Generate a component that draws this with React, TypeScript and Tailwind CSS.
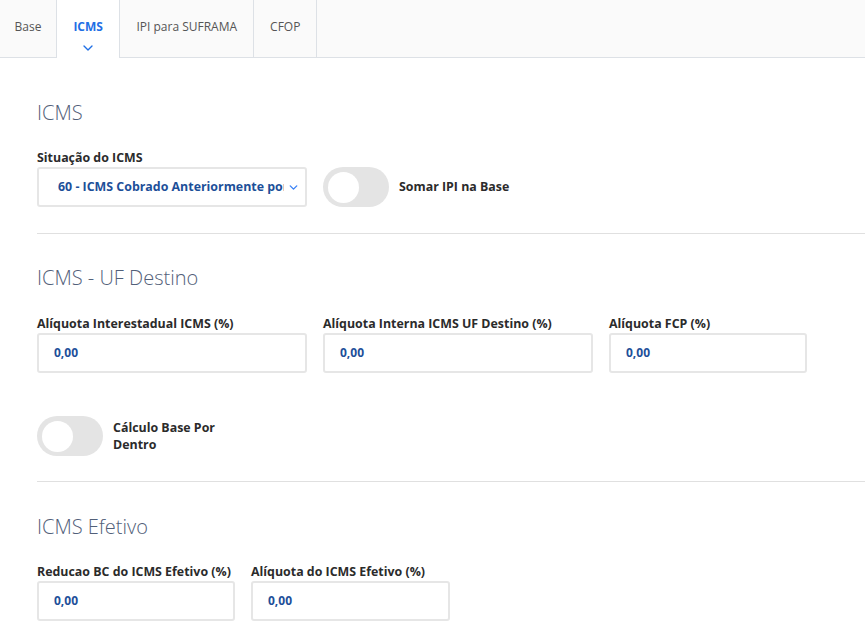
import { ChevronDown } from 'lucide-react'

const tabs = ['Base', 'ICMS', 'IPI para SUFRAMA', 'CFOP']

function Toggle() {
  return (
    <div className="w-[66px] h-[40px] rounded-full bg-[#e4e4e4] flex items-center pl-[5px] shrink-0">
      <div className="w-[31px] h-[31px] rounded-full bg-white" />
    </div>
  )
}

function Field({ label, width }: { label: string; width: string }) {
  return (
    <div className={`flex flex-col ${width}`}>
      <label className="text-[12.4px] font-bold text-[#2b2b2b] leading-[17px] mb-[1px] whitespace-nowrap">{label}</label>
      <div className="h-[40px] border-2 border-[#e6e6e6] rounded-[3px] flex items-center pl-[15px] text-[12px] font-bold text-[#1d4f99]">
        0,00
      </div>
    </div>
  )
}

function Heading({ children }: { children: string }) {
  return <h2 className="text-[20px] font-light text-[#526079] leading-[28px]">{children}</h2>
}

export default function App() {
  return (
    <div className="min-h-screen bg-white" style={{ fontFamily: '"Open Sans", sans-serif' }}>
      <div className="flex h-[58px] bg-[#fafafa] border-b border-[#dde1e6]">
        {tabs.map((t) => {
          const active = t === 'ICMS'
          return (
            <div
              key={t}
              className={`relative flex items-center justify-center text-[12px] border-r border-[#dde1e6] ${
                active ? 'bg-white text-[#1f6fe5] font-bold -mb-px px-[16.5px]' : 'text-[#555] px-4'
              } ${t === 'Base' ? 'px-[14.5px]' : ''}`}
            >
              <span className="-mt-[4px]">{t}</span>
              {active && (
                <ChevronDown className="absolute left-1/2 -translate-x-1/2 top-[40px] text-[#1f6fe5]" size={16} strokeWidth={2} />
              )}
            </div>
          )
        })}
      </div>

      <div className="pl-[37px]">
        <div className="pt-[41px]">
          <Heading>ICMS</Heading>
          <div className="flex items-end gap-[16px] mt-[22px]">
            <div className="flex flex-col w-[270px]">
              <label className="text-[12.4px] font-bold text-[#2b2b2b] leading-[17px] mb-[1px]">Situação do ICMS</label>
              <div className="h-[40px] border-2 border-[#e6e6e6] rounded-[3px] flex items-center pl-[19px] pr-[5px] text-[12.4px] font-bold text-[#1d4f99]">
                <span className="flex-1 overflow-hidden whitespace-nowrap">60 - ICMS Cobrado Anteriormente por</span>
                <ChevronDown className="text-[#3b82f6] ml-[3px] shrink-0" size={13} strokeWidth={2.5} />
              </div>
            </div>
            <div className="flex items-center gap-[10px]">
              <Toggle />
              <span className="text-[12.4px] font-bold text-[#2b2b2b]">Somar IPI na Base</span>
            </div>
          </div>
        </div>

        <div className="border-t border-[#e0e0e0] mt-[26px]" />

        <div className="pt-[30px]">
          <Heading>ICMS - UF Destino</Heading>
          <div className="flex gap-[16px] mt-[23px]">
            <Field label="Alíquota Interestadual ICMS (%)" width="w-[270px]" />
            <Field label="Alíquota Interna ICMS UF Destino (%)" width="w-[270px]" />
            <Field label="Alíquota FCP (%)" width="w-[198px]" />
          </div>
          <div className="flex items-center gap-[10px] mt-[43px]">
            <Toggle />
            <span className="text-[12.4px] font-bold text-[#2b2b2b] w-[120px] leading-[17px]">Cálculo Base Por Dentro</span>
          </div>
        </div>

        <div className="border-t border-[#e0e0e0] mt-[25px]" />

        <div className="pt-[31px] pb-[20px]">
          <Heading>ICMS Efetivo</Heading>
          <div className="flex gap-[16px] mt-[22px]">
            <Field label="Reducao BC do ICMS Efetivo (%)" width="w-[198px]" />
            <Field label="Alíquota do ICMS Efetivo (%)" width="w-[199px]" />
          </div>
        </div>
      </div>
    </div>
  )
}
